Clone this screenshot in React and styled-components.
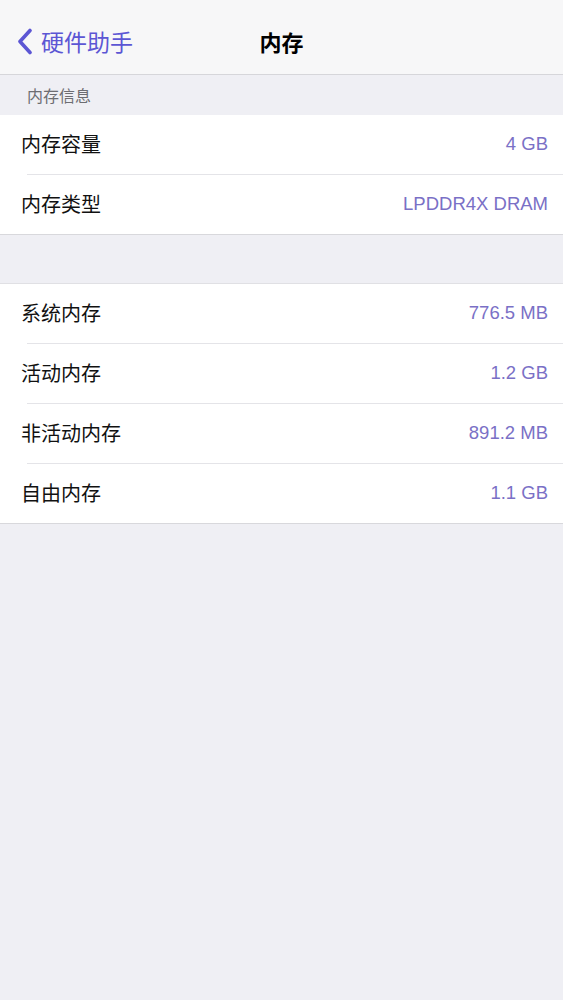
import React from "react";
import styled, { createGlobalStyle } from "styled-components";

const GlobalStyle = createGlobalStyle`
  html, body {
    margin: 0;
    padding: 0;
    background: #efeff4;
  }
  body {
    font-family: "Liberation Sans", "Noto Sans CJK SC", sans-serif;
  }
`;

const Page = styled.div`
  width: 563px;
  min-height: 1000px;
  background: #efeff4;
`;

const NavBar = styled.div`
  position: relative;
  height: 75px;
  box-sizing: border-box;
  padding-top: 8px;
  background: #f7f7f8;
  border-bottom: 1px solid #d6d6da;
  display: flex;
  align-items: center;
  justify-content: center;
`;

const BackButton = styled.div`
  position: absolute;
  left: 17px;
  top: 8px;
  bottom: 0;
  display: flex;
  align-items: center;
  gap: 8px;
  color: #5c56d4;
  font-size: 23px;
  font-family: "Noto Sans CJK SC", sans-serif;
`;

const Title = styled.div`
  font-family: "Noto Sans CJK SC", sans-serif;
  font-size: 22px;
  font-weight: 600;
  color: #000;
`;

const SectionHeader = styled.div`
  height: 40px;
  padding-left: 27px;
  display: flex;
  align-items: center;
  font-family: "Noto Sans CJK SC", sans-serif;
  font-size: 16px;
  color: #6d6d72;
`;

const Spacer = styled.div`
  height: 48px;
`;

const Group = styled.div`
  background: #fff;
  border-top: ${(p) => (p.$top ? "1px solid #e0e0e4" : "none")};
  border-bottom: 1px solid #d8d8dc;
`;

const ListRow = styled.div`
  height: 59px;
  box-sizing: border-box;
  padding: 0 15px 2px 21px;
  display: flex;
  align-items: center;
  justify-content: space-between;
`;

const Separator = styled.div`
  height: 1px;
  margin-left: 27px;
  background: #e4e4e8;
`;

const Label = styled.span`
  font-family: "Noto Sans CJK SC", sans-serif;
  font-size: 20px;
  color: #111;
`;

const Value = styled.span`
  font-family: "Liberation Sans", "Noto Sans", sans-serif;
  font-size: 18.5px;
  color: #7a70c6;
`;

const ChevronLeft = () => (
  <svg width="16" height="27" viewBox="0 0 16 27" fill="none">
    <path
      d="M13 2.5 L3 13.5 L13 24.5"
      stroke="#5c56d4"
      strokeWidth="3.6"
      strokeLinecap="round"
      strokeLinejoin="round"
    />
  </svg>
);

const groups = [
  [
    ["内存容量", "4 GB"],
    ["内存类型", "LPDDR4X DRAM"],
  ],
  [
    ["系统内存", "776.5 MB"],
    ["活动内存", "1.2 GB"],
    ["非活动内存", "891.2 MB"],
    ["自由内存", "1.1 GB"],
  ],
];

const InfoGroup = ({ rows, top }) => (
  <Group $top={top}>
    {rows.map(([label, value], i) => (
      <React.Fragment key={label}>
        {i > 0 && <Separator />}
        <ListRow>
          <Label>{label}</Label>
          <Value>{value}</Value>
        </ListRow>
      </React.Fragment>
    ))}
  </Group>
);

export default function App() {
  return (
    <Page>
      <GlobalStyle />
      <NavBar>
        <BackButton>
          <ChevronLeft />
          <span>硬件助手</span>
        </BackButton>
        <Title>内存</Title>
      </NavBar>
      <SectionHeader>内存信息</SectionHeader>
      <InfoGroup rows={groups[0]} />
      <Spacer />
      <InfoGroup rows={groups[1]} top />
    </Page>
  );
}
